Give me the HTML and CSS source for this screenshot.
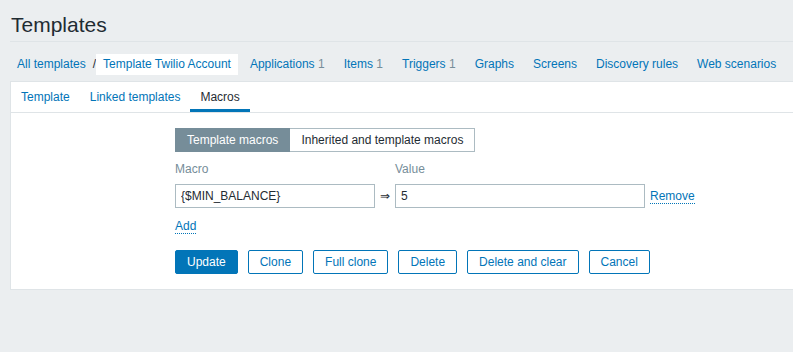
FILE: index.html
```html
<html>

<head>
    <title>Templates</title>
    <link rel="stylesheet" href="styles.css">
</head>

<body>
    <div class="header-title">
        <h1>Templates</h1>
    </div>
    <ul class="object-nav">
        <li class="breadcrumbs">
            <a href="#" class="crumb">All templates</a><span class="sep">/</span><span class="crumb selected">Template Twilio Account</span>
        </li>
        <li><a href="#">Applications</a> <sup>1</sup></li>
        <li><a href="#">Items</a> <sup>1</sup></li>
        <li><a href="#">Triggers</a> <sup>1</sup></li>
        <li><a href="#">Graphs</a></li>
        <li><a href="#">Screens</a></li>
        <li><a href="#">Discovery rules</a></li>
        <li><a href="#">Web scenarios</a></li>
    </ul>
    <div class="panel">
        <ul class="tabs">
            <li><a href="#">Template</a></li>
            <li><a href="#">Linked templates</a></li>
            <li class="active"><a href="#">Macros</a></li>
        </ul>
        <div class="form">
            <div class="radio-group">
                <span class="radio on">Template macros</span><span class="radio">Inherited and template macros</span>
            </div>
            <div class="macro-grid">
                <div class="label">Macro</div>
                <div></div>
                <div class="label">Value</div>
                <div></div>
                <input class="macro-input" type="text" value="{$MIN_BALANCE}">
                <div class="arrow">&rArr;</div>
                <input class="value-input" type="text" value="5">
                <div><a href="#" class="link-action">Remove</a></div>
            </div>
            <div class="add-row"><a href="#" class="link-action">Add</a></div>
            <div class="buttons">
                <button class="btn main">Update</button>
                <button class="btn">Clone</button>
                <button class="btn">Full clone</button>
                <button class="btn">Delete</button>
                <button class="btn">Delete and clear</button>
                <button class="btn">Cancel</button>
            </div>
        </div>
    </div>
</body>

</html>
```

FILE: styles.css
```css
body {
    margin: 0;
    background-color: #ebeef0;
    color: #1f2c33;
    font-family: "Liberation Sans", Arial, sans-serif;
    font-size: 12px;
}

a {
    color: #0275b8;
    text-decoration: none;
}

.header-title {
    margin-left: 10px;
    padding: 12px 0 4px 1px;
    border-bottom: 1px solid #dfe4e7;
}

.header-title h1 {
    margin: 0;
    font-size: 21px;
    font-weight: normal;
    line-height: 25px;
}

.object-nav {
    list-style: none;
    margin: 0;
    padding: 12px 0 6px 10px;
    display: flex;
    gap: 5px;
    white-space: nowrap;
}

.object-nav li {
    height: 21px;
    line-height: 21px;
    padding: 0 7px;
}

.object-nav li.breadcrumbs {
    padding: 0;
}

.object-nav sup {
    vertical-align: baseline;
    font-size: 12px;
    color: #768d99;
}

.crumb {
    display: inline-block;
    padding: 0 7px;
}

.crumb.selected {
    background-color: #ffffff;
    color: #0275b8;
}

.sep {
    color: #1f2c33;
}

.panel {
    margin-left: 10px;
    background-color: #ffffff;
    border: 1px solid #dfe4e7;
    border-right: 0;
}

.tabs {
    list-style: none;
    margin: 0;
    padding: 0;
    display: flex;
    border-bottom: 1px solid #dfe4e7;
}

.tabs li {
    padding: 0 10px;
    height: 27px;
    line-height: 30px;
    border-bottom: 3px solid transparent;
}

.tabs li.active {
    border-bottom-color: #0275b8;
}

.tabs li.active a {
    color: #1f2c33;
}

.form {
    padding: 15px 0 15px 164px;
}

.radio-group {
    display: flex;
}

.radio {
    height: 22px;
    line-height: 22px;
    padding: 0 11px;
    border: 1px solid #acbbc2;
    background-color: #ffffff;
}

.radio + .radio {
    border-left: 0;
}

.radio.on {
    background-color: #768d99;
    border-color: #768d99;
    color: #ffffff;
}

.macro-grid {
    display: grid;
    grid-template-columns: 200px 20px 250px auto;
    grid-template-rows: auto 24px;
    align-items: center;
    justify-content: start;
}

.label {
    color: #768d99;
    line-height: 14px;
    padding: 10px 0 8px;
}

.macro-grid input {
    box-sizing: border-box;
    height: 24px;
    border: 1px solid #acbbc2;
    padding: 0 5px;
    font-family: "Liberation Sans", Arial, sans-serif;
    font-size: 12px;
    color: #1f2c33;
    margin: 0;
}

.macro-input {
    width: 200px;
}

.value-input {
    width: 250px;
}

.arrow {
    text-align: center;
    font-size: 12px;
}

.macro-grid .link-action {
    margin-left: 5px;
}

.link-action {
    border-bottom: 1px dotted #0275b8;
}

.add-row {
    margin-top: 11px;
    line-height: 14px;
}

.buttons {
    display: flex;
    gap: 10px;
    margin-top: 17px;
}

.btn {
    height: 24px;
    padding: 0 11px;
    border: 1px solid #0275b8;
    border-radius: 2px;
    background-color: #ffffff;
    color: #0275b8;
    font-family: "Liberation Sans", Arial, sans-serif;
    font-size: 12px;
}

.btn.main {
    background-color: #0275b8;
    color: #ffffff;
}
```
